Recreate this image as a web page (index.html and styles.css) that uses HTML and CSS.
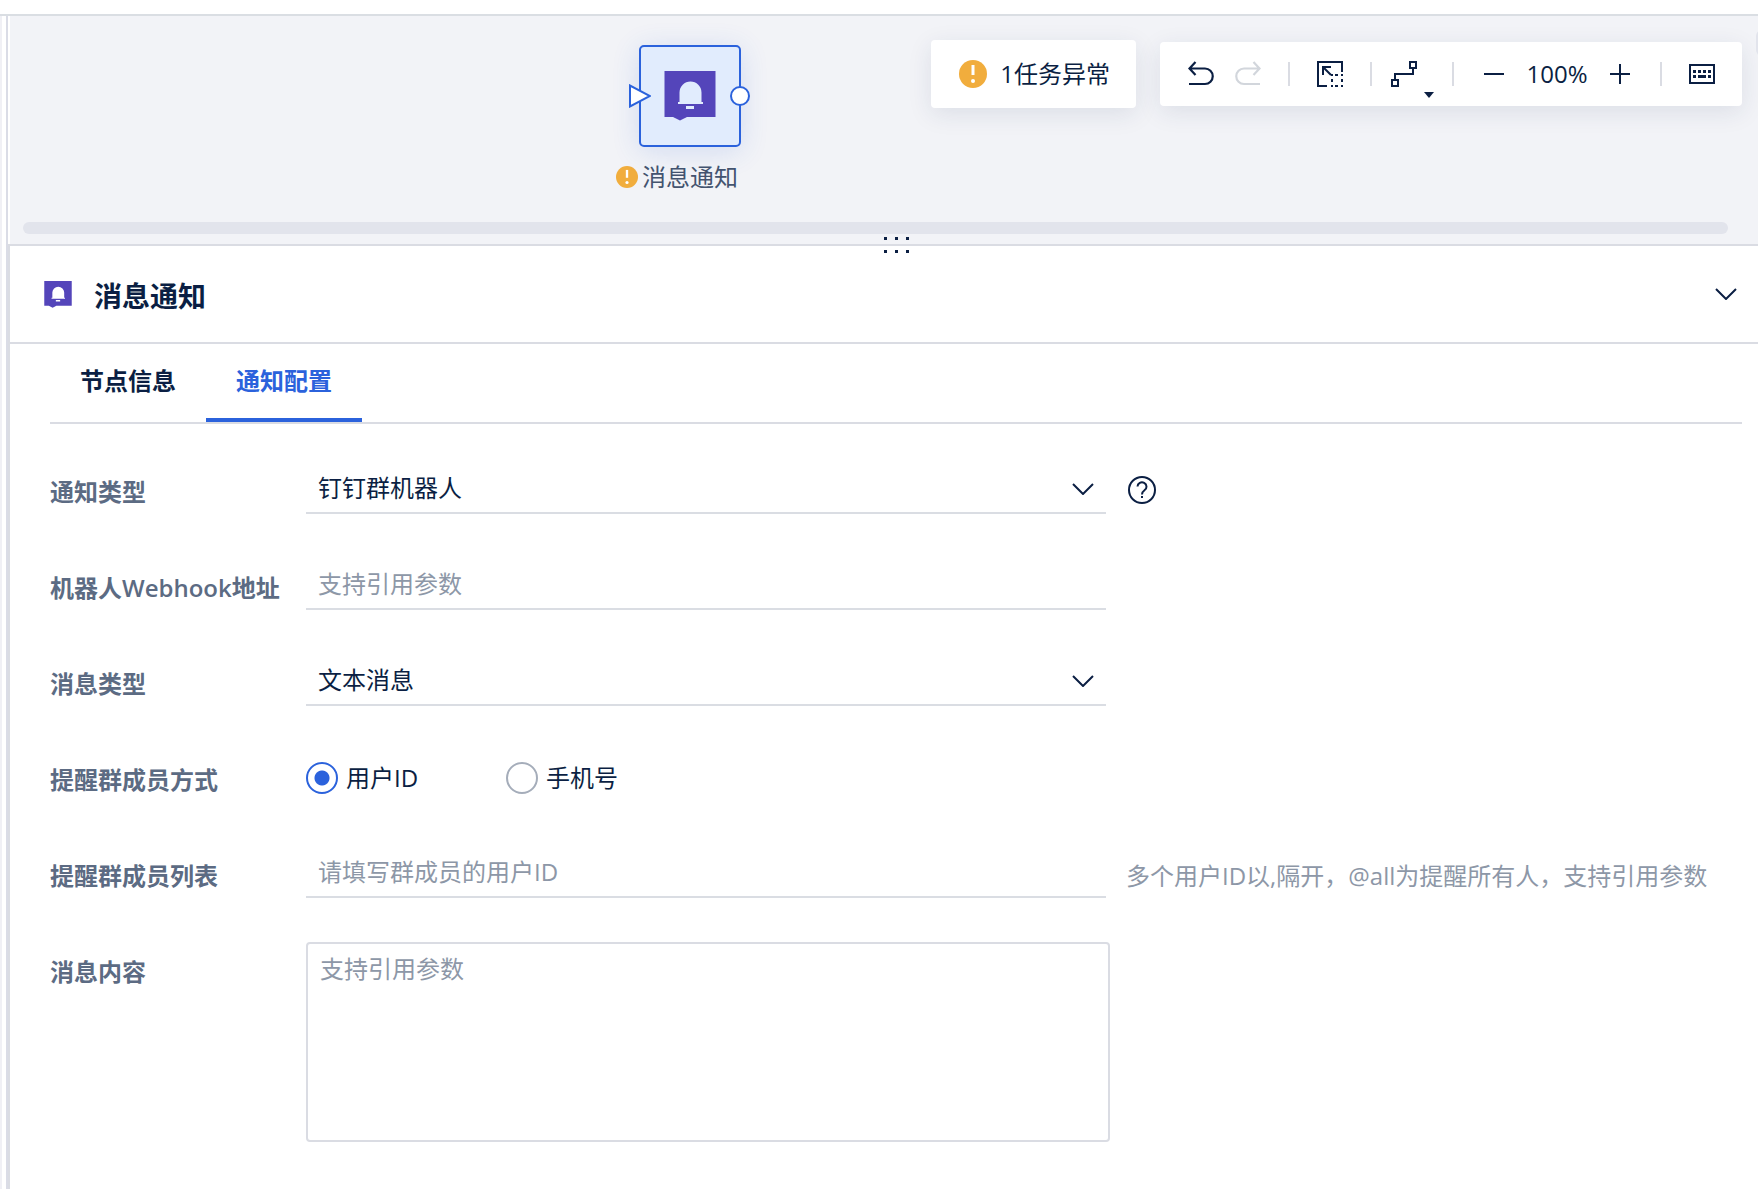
FILE: index.html
```html
<!DOCTYPE html>
<html lang="zh-CN">
  <head>
    <meta charset="utf-8">
    <title>消息通知</title>
    <link rel="stylesheet" href="styles.css">
  </head>
  <body>
    <svg class="sprite" aria-hidden="true">
      <symbol id="icon-notice" viewBox="0 0 52 50">
        <path d="M0.500 0h51v46H23l-7 3.500-7-3.500H0.500z" fill="#5445ba"/>
        <path d="M15.500 31V21.500a11 11 0 0 1 22 0V31H39v2H14v-2zM22 35h8v3h-8z" fill="currentColor"/>
      </symbol>
      <symbol id="icon-warn" viewBox="0 0 28 28">
        <circle cx="14" cy="14" r="14" fill="#f1ad3d"/>
        <path d="M12.500 5h3v10h-3z" fill="#fff"/>
        <circle cx="14" cy="21" r="2" fill="#fff"/>
      </symbol>
      <symbol id="icon-down" viewBox="0 0 22 12">
        <path d="M1 1l10 10L21 1" fill="none" stroke="currentColor" stroke-width="2"/>
      </symbol>
    </svg>

    <div class="topbar"></div>
    <div class="layout">
      <div class="sidebar"></div>
      <main class="main">
        <section class="canvas">
          <div class="node">
            <div class="node-box">
              <svg class="node-icon"><use href="#icon-notice"/></svg>
              <svg class="port-in" viewBox="0 0 22 24"><path d="M1 1.500v21L21 12z" fill="#fff" stroke="#2b62dc" stroke-width="2"/></svg>
              <span class="port-out"></span>
            </div>
            <div class="node-name">
              <svg><use href="#icon-warn"/></svg>
              <span>消息通知</span>
            </div>
          </div>

          <div class="tools">
            <button class="alert" type="button">
              <svg><use href="#icon-warn"/></svg>
              <span>1任务异常</span>
            </button>
            <div class="toolbar">
              <button type="button" aria-label="撤销">
                <svg viewBox="0 0 26 26"><path d="M7.500 1L1.500 7.500l6 6.500M1.500 7.500H17a7.500 7.500 0 0 1 0 15.500H1" fill="none" stroke="currentColor" stroke-width="2.200"/></svg>
              </button>
              <button class="redo" type="button" aria-label="重做" disabled>
                <svg viewBox="0 0 26 26"><path d="M18.500 1l6 6.500-6 6.500M24.500 7.500H9A7.500 7.500 0 0 0 9 23h16" fill="none" stroke="currentColor" stroke-width="2.200"/></svg>
              </button>
              <span class="line"></span>
              <button type="button" aria-label="框选">
                <svg viewBox="0 0 26 26">
                  <path d="M10 25H1V1h24v10M14 14L6 6M6 14V6h8" fill="none" stroke="currentColor" stroke-width="2"/>
                  <path d="M14 13h2v2h-2zM18 13h3v2h-3zM24 13h2v2h-2zM14 18h2v3h-2zM24 18h2v3h-2zM14 24h2v2h-2zM18 24h3v2h-3zM24 24h2v2h-2z" fill="currentColor"/>
                </svg>
              </button>
              <span class="line"></span>
              <button class="link" type="button" aria-label="连线样式">
                <svg viewBox="0 0 26 26"><path d="M19 1h6v6h-6zM1 19h6v6H1zM4 19v-6h18V7" fill="none" stroke="currentColor" stroke-width="2"/></svg>
                <i class="caret"></i>
              </button>
              <span class="line"></span>
              <button class="minus" type="button" aria-label="缩小">
                <svg viewBox="0 0 20 20"><path d="M0 10h20" stroke="currentColor" stroke-width="2"/></svg>
              </button>
              <span class="percent">100%</span>
              <button class="plus" type="button" aria-label="放大">
                <svg viewBox="0 0 20 20"><path d="M0 10h20M10 0v20" stroke="currentColor" stroke-width="2"/></svg>
              </button>
              <span class="line"></span>
              <button type="button" aria-label="快捷键">
                <svg viewBox="0 0 26 26">
                  <path d="M1 4h24v18H1z" fill="none" stroke="currentColor" stroke-width="2"/>
                  <path d="M4 9h3v3H4zM9 9h3v3H9zM14 9h3v3h-3zM19 9h3v3h-3zM4 14h3v3H4zM9 14h8v3H9zM19 14h3v3h-3z" fill="currentColor"/>
                </svg>
              </button>
            </div>
          </div>

          <div class="scroll-y"></div>
          <div class="scroll-x"></div>
        </section>

        <section class="panel">
          <div class="handle"><i></i><i></i><i></i><i></i><i></i><i></i></div>
          <header class="panel-header">
            <svg class="panel-icon"><use href="#icon-notice"/></svg>
            <h1>消息通知</h1>
            <button class="collapse" type="button" aria-label="收起"><svg class="down"><use href="#icon-down"/></svg></button>
          </header>

          <div class="tabs" role="tablist">
            <button class="tab" type="button" role="tab">节点信息</button>
            <button class="tab active" type="button" role="tab" aria-selected="true">通知配置</button>
          </div>

          <form class="form">
            <div class="row">
              <label class="label" for="noticeType">通知类型</label>
              <div class="control">
                <select id="noticeType"><option>钉钉群机器人</option></select>
                <svg class="down"><use href="#icon-down"/></svg>
              </div>
              <button class="help" type="button" aria-label="帮助">
                <svg viewBox="0 0 28 28">
                  <circle cx="14" cy="14" r="13" fill="none" stroke="currentColor" stroke-width="2"/>
                  <path d="M9.500 10.500a4.500 4.300 0 1 1 7 3.700c-1.700 1.200-2.500 2-2.500 4.300" fill="none" stroke="currentColor" stroke-width="2"/>
                  <path d="M13 20h2v2h-2z" fill="currentColor"/>
                </svg>
              </button>
            </div>
            <div class="row">
              <label class="label" for="webhook">机器人Webhook地址</label>
              <div class="control"><input id="webhook" type="text" placeholder="支持引用参数"></div>
            </div>
            <div class="row">
              <label class="label" for="messageType">消息类型</label>
              <div class="control">
                <select id="messageType"><option>文本消息</option></select>
                <svg class="down"><use href="#icon-down"/></svg>
              </div>
            </div>
            <div class="row" role="radiogroup" aria-labelledby="remindBy">
              <span class="label" id="remindBy">提醒群成员方式</span>
              <label class="radio"><input type="radio" name="remind" checked>用户ID</label>
              <label class="radio"><input type="radio" name="remind">手机号</label>
            </div>
            <div class="row">
              <label class="label" for="members">提醒群成员列表</label>
              <div class="control"><input id="members" type="text" placeholder="请填写群成员的用户ID"></div>
              <span class="hint">多个用户ID以,隔开，@all为提醒所有人，支持引用参数</span>
            </div>
            <div class="row">
              <label class="label" for="content">消息内容</label>
              <textarea id="content" placeholder="支持引用参数"></textarea>
            </div>
          </form>
        </section>
      </main>
    </div>
  </body>
</html>
```
FILE: styles.css
```css
* {
  box-sizing: border-box;
}
body {
  margin: 0;
  min-height: 100vh;
  display: flex;
  flex-direction: column;
  font-family: "Open Sans", "Noto Sans CJK SC", sans-serif;
  font-size: 24px;
  line-height: 36px;
  color: #0b1f43;
  background: #fff;
}
button, input, select, textarea {
  font: inherit;
  color: inherit;
  margin: 0;
  padding: 0;
  border: 0;
  background: none;
}
button {
  cursor: pointer;
}
svg {
  display: block;
  flex: none;
}
.sprite {
  position: absolute;
  width: 0;
  height: 0;
}
.topbar {
  height: 16px;
  border-bottom: 2px solid #dadee3;
}
.layout {
  flex: 1;
  display: flex;
}
.sidebar {
  width: 8px;
  border-left: 2px solid #f0f0f5;
  border-right: 2px solid #dadce6;
}
.main {
  flex: 1;
  min-width: 0;
  display: flex;
  flex-direction: column;
}

/* canvas */
.canvas {
  position: relative;
  height: 228px;
  margin-left: 2px;
  background: #f2f3f7;
  overflow: hidden;
}
.node {
  position: absolute;
  left: 603px;
  top: 29px;
  display: flex;
  flex-direction: column;
  align-items: center;
}
.node-box {
  position: relative;
  width: 102px;
  height: 102px;
  margin-left: 26px;
  display: flex;
  align-items: center;
  justify-content: center;
  border: 2px solid #2b62dc;
  border-radius: 5px;
  background: #e1ecfd;
  box-shadow: 0 4px 28px rgba(43, 98, 220, 0.16);
}
.node-icon {
  width: 52px;
  height: 50px;
  color: #e1ecfd;
}
.port-in {
  position: absolute;
  left: -12px;
  top: 37px;
  width: 22px;
  height: 24px;
}
.port-out {
  position: absolute;
  right: -11px;
  top: 39px;
  width: 20px;
  height: 20px;
  border: 2px solid #2b62dc;
  border-radius: 50%;
  background: #fff;
}
.node-name {
  display: flex;
  align-items: center;
  gap: 4px;
  margin-top: 12px;
  color: #44546f;
}
.node-name svg {
  width: 22px;
  height: 22px;
}
.tools {
  position: absolute;
  top: 24px;
  right: 16px;
  display: flex;
  align-items: center;
  gap: 24px;
}
.alert, .toolbar {
  display: flex;
  align-items: center;
  border-radius: 4px;
  background: #fff;
  box-shadow: 0 6px 24px rgba(30, 50, 90, 0.1);
}
.alert {
  height: 68px;
  padding: 0 26px 0 28px;
  gap: 13px;
}
.alert svg {
  width: 28px;
  height: 28px;
}
.toolbar {
  height: 64px;
  padding: 0 27px 0 28px;
}
.toolbar svg {
  width: 26px;
  height: 26px;
}
.toolbar .redo {
  margin-left: 21px;
  color: #d2d6dc;
}
.line {
  width: 2px;
  height: 24px;
  margin: 0 27px;
  background: #dadce3;
}
.link {
  position: relative;
  margin: 0 8px 0 -8px;
}
.caret {
  position: absolute;
  left: 33px;
  top: 31px;
  border: 5px solid transparent;
  border-top: 6px solid #0b1f43;
  border-bottom: 0;
}
.toolbar .minus svg, .toolbar .plus svg {
  width: 20px;
  height: 20px;
}
.minus {
  margin-left: 3px;
}
.plus {
  margin-right: 3px;
}
.percent {
  width: 106px;
  text-align: center;
}
.scroll-x {
  position: absolute;
  left: 13px;
  right: 30px;
  bottom: 10px;
  height: 12px;
  border-radius: 6px;
  background: #e2e4ec;
}
.scroll-y {
  position: absolute;
  right: -10px;
  top: 14px;
  width: 12px;
  height: 26px;
  border-radius: 6px;
  background: #e2e4ec;
}

/* config panel */
.panel {
  position: relative;
  flex: 1;
  border-top: 2px solid #dadce3;
  border-left: 2px solid #dadce3;
}
.handle {
  position: absolute;
  top: -9px;
  left: 50%;
  display: grid;
  grid-template-columns: repeat(3, 3px);
  gap: 10px 8px;
}
.handle i {
  height: 3px;
  background: #0b1f43;
}
.panel-header {
  display: flex;
  align-items: center;
  height: 98px;
  padding: 0 21px 0 34px;
  border-bottom: 2px solid #dadce3;
}
.panel-icon {
  width: 28px;
  height: 27px;
  color: #fff;
}
.panel-header h1 {
  flex: 1;
  margin: 0;
  padding: 4px 0 0 22px;
  font-size: 28px;
  font-weight: 700;
}
.down {
  width: 22px;
  height: 12px;
}
.tabs {
  display: flex;
  height: 80px;
  margin: 0 16px 0 40px;
  border-bottom: 2px solid #dadce3;
}
.tab {
  padding: 0 30px;
  font-weight: 700;
  border-bottom: 4px solid transparent;
}
.tab.active {
  color: #2b62dc;
  border-bottom-color: #2b62dc;
}
.form {
  padding: 38px 16px 0 40px;
}
.row {
  display: flex;
  align-items: flex-start;
  min-height: 96px;
}
.label {
  flex: none;
  width: 256px;
  line-height: 60px;
  font-weight: 600;
  color: #5c6b83;
}
.control {
  position: relative;
  width: 800px;
  height: 44px;
  margin-top: 8px;
  border-bottom: 2px solid #dadde3;
}
.control input, .control select {
  display: block;
  width: 100%;
  height: 36px;
  padding: 0 12px;
  outline: none;
  appearance: none;
}
.control .down {
  position: absolute;
  right: 12px;
  top: 13px;
  pointer-events: none;
}
::placeholder {
  color: #8d97a7;
  opacity: 1;
}
.help {
  margin: 14px 0 0 22px;
}
.help svg {
  width: 28px;
  height: 28px;
}
.radio {
  display: flex;
  align-items: center;
  gap: 8px;
  width: 200px;
  height: 56px;
}
.radio input {
  appearance: none;
  width: 32px;
  height: 32px;
  border: 2px solid #a5adba;
  border-radius: 50%;
}
.radio input:checked {
  border-color: #2b62dc;
  background: radial-gradient(circle, #2b62dc 7px, transparent 8px);
}
.hint {
  margin-left: 20px;
  line-height: 60px;
  color: #8d97a7;
  white-space: nowrap;
}
textarea#content {
  width: 804px;
  height: 200px;
  padding: 7px 12px;
  border: 2px solid #dadce3;
  border-radius: 4px;
  outline: none;
  resize: none;
}
```
